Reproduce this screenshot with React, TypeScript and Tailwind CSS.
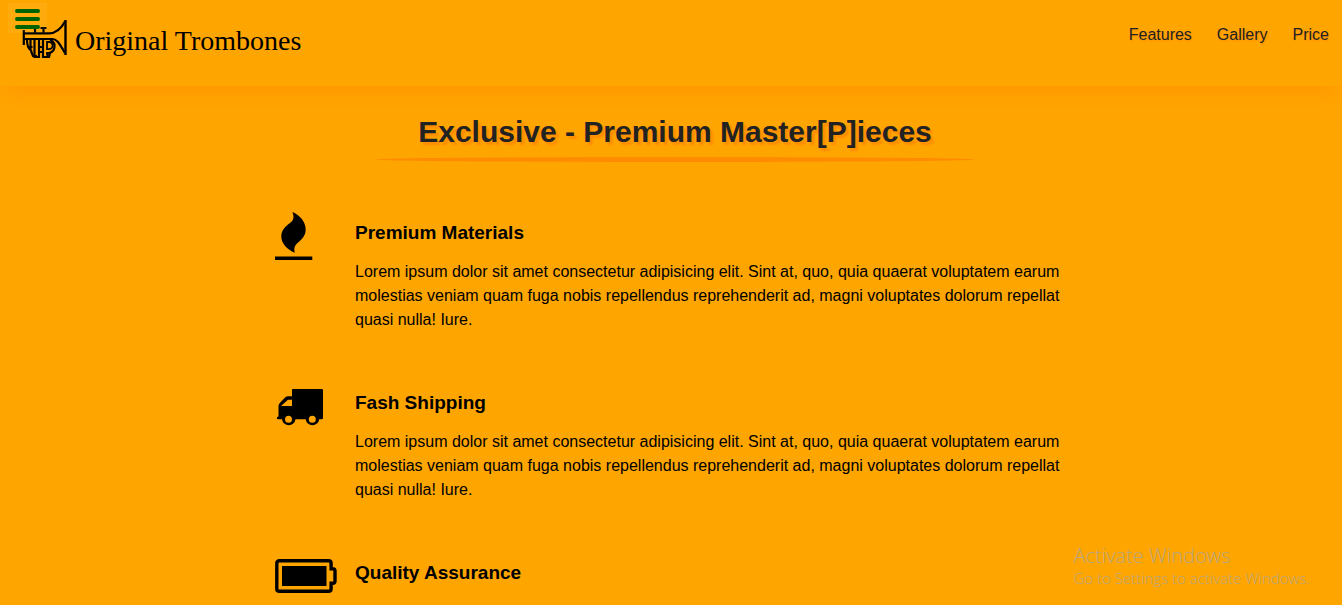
import type { ReactNode } from "react";

const LOREM =
  "Lorem ipsum dolor sit amet consectetur adipisicing elit. Sint at, quo, quia quaerat voluptatem earum molestias veniam quam fuga nobis repellendus reprehenderit ad, magni voluptates dolorum repellat quasi nulla! Iure.";

function TrumpetIcon() {
  return (
    <svg width="45" height="39" viewBox="0 0 45 39" fill="none" stroke="#000" strokeWidth="2.200" aria-hidden="true">
      <path d="M1.800 10v15M1 13.300h26C34 13.300 39 9 43 1.500M1 19h29c5 0 7 4 13 14" />
      <path d="M43.500 0v35" strokeWidth="2.400" />
      <path d="M13 13V8M10 8h6M21.500 13V8M18.500 8h6" />
      <path d="M5 20c0 6 1 9 5 11M8.500 20v9M5.500 27h5M12.500 20v17h4.500V20M17 27h4M17 32h4M21 20v17h4.500v-5" />
      <path d="M25 22h2a3.600 3.600 0 0 1 0 7.200h-2z" strokeWidth="1.800" />
      <path d="M28 20c7 3 6 13-4 13.500M9 31l2 5h4M24 37h3l1-4" />
    </svg>
  );
}

function FireIcon() {
  return (
    <svg width="38" height="48" viewBox="0 0 38 48" aria-hidden="true">
      <path d="M17.300 0C25 3 30.700 10 30.700 17.500c0 7.500-5.200 10.500-8.700 14-2.800 2.800-3.200 5.500-2.200 9.300C12 37.500 6.300 31.500 6.300 24.500c0-6.500 4-10 8.700-13.500 3.500-2.600 4.600-6 2.300-11z" />
      <path d="M0 44.500h37.300V48H0z" />
    </svg>
  );
}

function TruckIcon() {
  return (
    <svg width="48" height="48" viewBox="0 -7 48 48" aria-hidden="true">
      <path
        fillRule="evenodd"
        d="M18 0H47q1 0 1 1V29q0 1.300-1.300 1.300h-2.500a6.800 6.800 0 0 1-13.500 0H20.500a6.800 6.800 0 0 1-13.500 0H3.500Q1.800 30.300 1.800 29t1.700-1.500V17q0-1.800 1.300-3.100l5.300-5.300Q11.400 7.300 13.300 7.300H17V1Q17 0 18 0zM6.500 17H17v-6.300h-4L6.500 16.500zM13.500 26.700a3.500 3.500 0 1 0 0 7 3.500 3.500 0 0 0 0-7zM37.300 26.700a3.500 3.500 0 1 0 0 7 3.500 3.500 0 0 0 0-7z"
      />
    </svg>
  );
}

function BatteryIcon() {
  return (
    <svg width="62" height="48" viewBox="0 -7 62 48" aria-hidden="true">
      <path
        d="M4.500 1.700h49q2.600 0 2.600 2.600v5.400h1.500q2.400 0 2.400 2.400v9.800q0 2.400-2.400 2.400h-1.500v5.400q0 2.600-2.600 2.600h-49q-2.700 0-2.700-2.600V4.300q0-2.600 2.700-2.600z"
        fill="none"
        stroke="#000"
        strokeWidth="3.400"
      />
      <path d="M7 7h44.500v20H7z" />
    </svg>
  );
}

function Feature({ icon, title, children }: { icon: ReactNode; title: string; children?: ReactNode }) {
  return (
    <article className="flex pb-[50px]">
      <div className="w-20 shrink-0">{icon}</div>
      <div className="pt-[9px]">
        <h2 className="text-[19px] font-bold leading-6">{title}</h2>
        {children && <p className="mt-[15px] leading-6">{children}</p>}
      </div>
    </article>
  );
}

export default function App() {
  return (
    <div className="h-screen overflow-hidden bg-[#ffa500] font-['Liberation_Sans',Arial,sans-serif] text-black">
      <header className="flex h-[86px] items-start justify-between pl-[22px] pr-[13px] shadow-[0_10px_20px_-4px_#ff8c0090]">
        <button
          type="button"
          aria-label="Menu"
          className="absolute left-2 top-[3px] flex h-[30px] w-[39px] flex-col gap-1 bg-white/5 pl-[7px] pt-[6px]"
        >
          <span className="h-1 w-[25px] rounded-sm bg-[#006400]" />
          <span className="h-1 w-[25px] rounded-sm bg-[#006400]" />
          <span className="h-1 w-[25px] rounded-sm bg-[#006400]" />
        </button>
        <a href="#home" className="flex items-start gap-2 pt-5">
          <TrumpetIcon />
          <span className="font-['Liberation_Serif',serif] text-[28px] leading-[42px]">Original Trombones</span>
        </a>
        <nav className="flex gap-[25px] pt-[23px] text-base leading-6 text-[#222] text-shadow-[1px_1px_2px_#ff8c00]">
          <a href="#features">Features</a>
          <a href="#gallery">Gallery</a>
          <a href="#price">Price</a>
        </nav>
      </header>
      <main className="flex flex-col items-center pl-2">
        <h1 className="mt-6 text-3xl font-bold leading-[44px] text-[#222] text-shadow-[3px_3px_2px_#ff8c00]">
          Exclusive - Premium Master[P]ieces
        </h1>
        <div className="mt-[3px] h-[5px] w-full max-w-[600px] rounded-[50%] bg-[#ff8c00]" />
        <section id="features" className="mt-[50px] w-full max-w-[800px]">
          <Feature icon={<FireIcon />} title="Premium Materials">
            {LOREM}
          </Feature>
          <Feature icon={<TruckIcon />} title="Fash Shipping">
            {LOREM}
          </Feature>
          <Feature icon={<BatteryIcon />} title="Quality Assurance" />
        </section>
      </main>
      <aside className="absolute bottom-[17px] right-8 font-['Open_Sans',sans-serif] font-light text-[#b8a581]">
        <p className="text-xl leading-6">Activate Windows</p>
        <p className="text-[15px] leading-5">Go to Settings to activate Windows.</p>
      </aside>
    </div>
  );
}
